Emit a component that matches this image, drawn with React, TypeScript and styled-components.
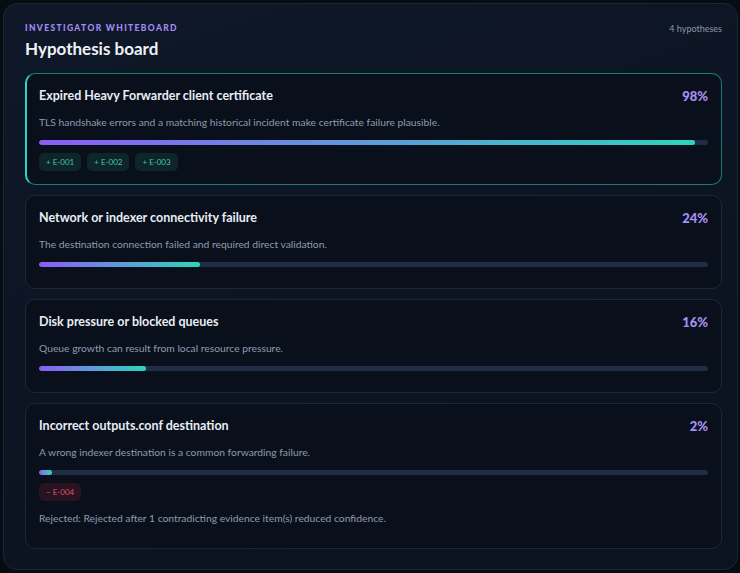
import React from 'react'
import styled, { createGlobalStyle } from 'styled-components'

const GlobalStyle = createGlobalStyle`
  html, body {
    margin: 0;
    padding: 0;
    background: #070b12;
  }
  body {
    font-family: Lato, 'Noto Sans', sans-serif;
    color: #e2e8f0;
  }
`

type Hypothesis = {
  id: string
  title: string
  summary: string
  confidence: number
  support?: string[]
  contradict?: string[]
  rejected?: string
  active?: boolean
}

const hypotheses: Hypothesis[] = [
  {
    id: 'h1',
    title: 'Expired Heavy Forwarder client certificate',
    summary:
      'TLS handshake errors and a matching historical incident make certificate failure plausible.',
    confidence: 98,
    support: ['E-001', 'E-002', 'E-003'],
    active: true,
  },
  {
    id: 'h2',
    title: 'Network or indexer connectivity failure',
    summary: 'The destination connection failed and required direct validation.',
    confidence: 24,
  },
  {
    id: 'h3',
    title: 'Disk pressure or blocked queues',
    summary: 'Queue growth can result from local resource pressure.',
    confidence: 16,
  },
  {
    id: 'h4',
    title: 'Incorrect outputs.conf destination',
    summary: 'A wrong indexer destination is a common forwarding failure.',
    confidence: 2,
    contradict: ['E-004'],
    rejected: 'Rejected after 1 contradicting evidence item(s) reduced confidence.',
  },
]

const Page = styled.div`
  padding: 3px 2px 3px 3px;
`

const Panel = styled.section`
  border: 1px solid #1b2536;
  border-radius: 14px;
  background: linear-gradient(160deg, #0f1828 0%, #0c1422 60%, #0b1320 100%);
  padding: 18px 15px 20px 21px;
  min-height: 525px;
`

const Header = styled.header`
  display: flex;
  justify-content: space-between;
  align-items: flex-start;
  margin-bottom: 13px;
`

const Eyebrow = styled.div`
  font-size: 8.5px;
  font-weight: 900;
  letter-spacing: 0.16em;
  color: #a38cf4;
  text-transform: uppercase;
  line-height: 12px;
`

const Title = styled.h1`
  margin: 4px 0 0;
  font-size: 17px;
  font-weight: 700;
  color: #eef2f7;
  line-height: 22px;
`

const Count = styled.div`
  font-size: 9px;
  color: #8a96a8;
  line-height: 12px;
  padding-top: 1px;
`

const List = styled.div`
  display: flex;
  flex-direction: column;
  gap: 10px;
`

const Card = styled.article<{ $active?: boolean }>`
  border: 1px solid ${(p) => (p.$active ? 'rgba(45, 212, 191, 0.55)' : '#1b2638')};
  border-left: ${(p) => (p.$active ? '2px solid #2dd4bf' : '1px solid #1b2638')};
  border-radius: 10px;
  background: #09101c;
  padding: ${(p) => (p.$active ? '14px 13px 13px 12px' : '14px 13px 13px 13px')};
`

const CardHead = styled.div`
  display: flex;
  justify-content: space-between;
  align-items: center;
`

const CardTitle = styled.h3`
  margin: 0;
  font-size: 12.5px;
  font-weight: 700;
  color: #e8edf4;
  line-height: 16px;
`

const Percent = styled.span`
  font-size: 13px;
  font-weight: 900;
  color: #a991f5;
  line-height: 16px;
`

const Summary = styled.p`
  margin: 11px 0 0;
  font-size: 10.3px;
  color: #8f9bad;
  line-height: 14px;
`

const Track = styled.div`
  margin: 11px 0 8px;
  height: 5px;
  border-radius: 3px;
  background: #1f2d45;
  overflow: hidden;
`

const Fill = styled.div`
  height: 100%;
  border-radius: 3px;
  background: linear-gradient(90deg, #8b5cf6 0%, #5f9ad8 50%, #2dd4bf 100%);
`

const Chips = styled.div`
  display: flex;
  gap: 6px;
`

const Chip = styled.span<{ $tone: 'support' | 'contradict' }>`
  display: inline-flex;
  align-items: center;
  height: 18px;
  padding: 0 7px;
  border-radius: 5px;
  font-size: 8px;
  background: ${(p) => (p.$tone === 'support' ? '#0e2529' : '#2a1320')};
  color: ${(p) => (p.$tone === 'support' ? '#3cc9a6' : '#d9566e')};
`

const Rejected = styled.p`
  margin: 10px 0 10px;
  font-size: 10.3px;
  color: #8f9bad;
  line-height: 14px;
`

export default function App() {
  return (
    <>
      <GlobalStyle />
      <Page>
        <Panel>
          <Header>
            <div>
              <Eyebrow>Investigator whiteboard</Eyebrow>
              <Title>Hypothesis board</Title>
            </div>
            <Count>{hypotheses.length} hypotheses</Count>
          </Header>
          <List>
            {hypotheses.map((h) => (
              <Card key={h.id} $active={h.active}>
                <CardHead>
                  <CardTitle>{h.title}</CardTitle>
                  <Percent>{h.confidence}%</Percent>
                </CardHead>
                <Summary>{h.summary}</Summary>
                <Track>
                  <Fill style={{ width: `${h.confidence}%` }} />
                </Track>
                <Chips>
                  {h.support?.map((e) => (
                    <Chip key={e} $tone="support">
                      + {e}
                    </Chip>
                  ))}
                  {h.contradict?.map((e) => (
                    <Chip key={e} $tone="contradict">
                      − {e}
                    </Chip>
                  ))}
                </Chips>
                {h.rejected && <Rejected>Rejected: {h.rejected}</Rejected>}
              </Card>
            ))}
          </List>
        </Panel>
      </Page>
    </>
  )
}
